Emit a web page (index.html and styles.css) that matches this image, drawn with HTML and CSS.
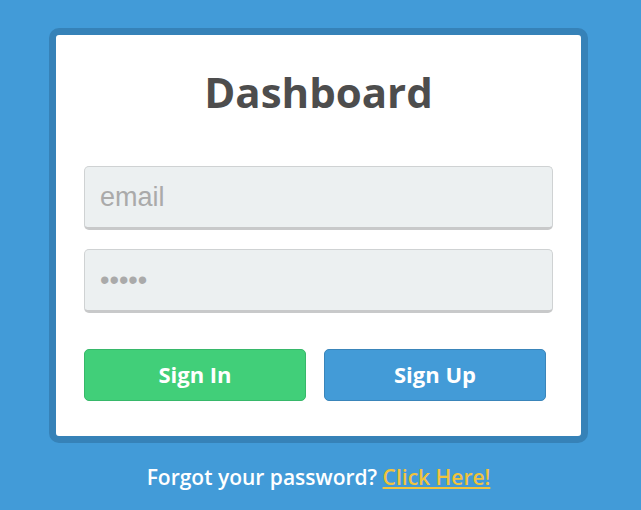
FILE: index.html
```html
<!DOCTYPE html>
<html>
<head>
<meta charset="utf-8">
<link rel="stylesheet" href="styles.css">
</head>
<body>
<div class="wrap">
  <div class="card">
    <h1 class="title">Dashboard</h1>
    <form class="form">
      <input class="field" type="text" placeholder="email">
      <input class="field" type="password" value="12345">
      <div class="actions">
        <button class="btn btn-in" type="button">Sign In</button>
        <button class="btn btn-up" type="button">Sign Up</button>
      </div>
    </form>
  </div>
  <p class="forgot">Forgot your password? <a class="link" href="#">Click Here!</a></p>
</div>
</body>
</html>
```
FILE: styles.css
```css
html, body {
  margin: 0;
  padding: 0;
}
body {
  background: #429bd8;
  font-family: "Open Sans", "Liberation Sans", sans-serif;
}
.wrap {
  width: 539px;
  margin: 28px 0 0 49px;
}
.card {
  background: #ffffff;
  border: 7px solid #3682b8;
  border-radius: 10px;
  padding: 0 28px 35px;
}
.title {
  margin: 28px 0 46px;
  text-align: center;
  font-size: 42px;
  font-weight: 700;
  line-height: 57px;
  color: #4d4d4d;
}
.form {
  display: flex;
  flex-direction: column;
  margin: 0;
}
.field {
  box-sizing: border-box;
  height: 64px;
  width: 100%;
  margin: 0 0 19px;
  padding: 0 15px;
  background: #ecf0f1;
  border: 1px solid #cfd2d3;
  border-bottom: 3px solid #c8c9ca;
  border-radius: 5px;
  font-family: "Liberation Sans", Arial, sans-serif;
  font-size: 27px;
  color: #aaaaaa;
  outline: none;
}
.field::placeholder {
  color: #aaaaaa;
}
.actions {
  display: flex;
  gap: 18px;
  margin-top: 17px;
}
.btn {
  box-sizing: border-box;
  width: 222px;
  height: 52px;
  border-radius: 5px;
  font-family: "Open Sans", sans-serif;
  font-weight: 700;
  font-size: 22px;
  color: #ffffff;
  cursor: pointer;
  padding: 0 0 2px;
}
.btn-in {
  background: #41cf79;
  border: 1px solid #37b86a;
}
.btn-up {
  background: #439bd7;
  border: 1px solid #3a85ba;
}
.forgot {
  margin: 21px 0 0;
  text-align: center;
  font-size: 21px;
  font-weight: 600;
  line-height: 27px;
  color: #ffffff;
}
.link {
  color: #f1c33c;
  text-decoration: underline;
}
```
